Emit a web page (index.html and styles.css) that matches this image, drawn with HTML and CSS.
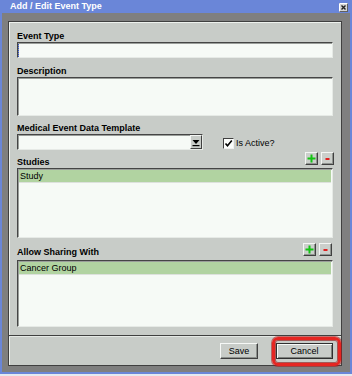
FILE: index.html
```html
<!DOCTYPE html>
<html>
<head>
<meta charset="utf-8">
<link rel="stylesheet" href="styles.css">
</head>
<body>
<div class="window">
  <div class="titlebar">
    <span class="title">Add / Edit Event Type</span>
    <span class="close">
      <svg width="9" height="9" viewBox="0 0 9 9"><rect x="0.5" y="0.5" width="8" height="8" fill="#d6d6d6" stroke="#606060"/><path d="M0.5 8.5V0.5H8.5" fill="none" stroke="#fff"/><path d="M2.5 2.5L6.5 6.5M6.5 2.5L2.5 6.5" stroke="#202020" stroke-width="1.4"/></svg>
    </span>
  </div>
  <div class="frame">
    <div class="panel">
      <div class="main">
        <div class="label">Event Type</div>
        <div class="input"><span class="caret"></span></div>

        <div class="label label-desc">Description</div>
        <div class="textarea"></div>

        <div class="label label-tpl">Medical Event Data Template</div>
        <div class="select-row">
          <div class="select">
            <div class="select-btn">
              <svg width="10" height="14" viewBox="0 0 10 14"><path d="M1.5 5H8.5L5 9Z" fill="#000"/><rect x="1.5" y="10" width="7" height="1.2" fill="#000"/></svg>
            </div>
          </div>
          <div class="check">
            <span class="box"><svg width="9" height="9" viewBox="0 0 9 9"><path d="M1.5 4.5L3.5 6.8L7.8 1.6" fill="none" stroke="#000" stroke-width="1.6"/></svg></span>
            <span class="check-text">Is Active?</span>
          </div>
        </div>

        <div class="list-head head-studies">
          <span class="label">Studies</span>
          <div class="tools">
            <button class="tool plus" type="button"><svg width="9" height="9" viewBox="0 0 9 9"><path d="M3.5 0.5H5.5V3.5H8.5V5.5H5.5V8.5H3.5V5.5H0.5V3.5H3.5Z" fill="#12c412"/></svg></button>
            <button class="tool minus" type="button"><svg width="9" height="9" viewBox="0 0 9 9"><rect x="2.5" y="4" width="4" height="2" fill="#e02020"/></svg></button>
          </div>
        </div>
        <div class="list list-studies">
          <div class="item">Study</div>
        </div>

        <div class="list-head head-sharing">
          <span class="label">Allow Sharing With</span>
          <div class="tools tools-shift">
            <button class="tool plus" type="button"><svg width="9" height="9" viewBox="0 0 9 9"><path d="M3.5 0.5H5.5V3.5H8.5V5.5H5.5V8.5H3.5V5.5H0.5V3.5H3.5Z" fill="#12c412"/></svg></button>
            <button class="tool minus" type="button"><svg width="9" height="9" viewBox="0 0 9 9"><rect x="2.5" y="4" width="4" height="2" fill="#e02020"/></svg></button>
          </div>
        </div>
        <div class="list list-sharing">
          <div class="item">Cancer Group</div>
        </div>
      </div>
      <div class="footer">
        <button class="btn btn-save" type="button">Save</button>
        <button class="btn btn-cancel" type="button">Cancel</button>
      </div>
    </div>
  </div>
  <div class="highlight"></div>
</div>
</body>
</html>
```
FILE: styles.css
```css
html, body {
  margin: 0;
  padding: 0;
}
body {
  background: #e6eaf0;
  font-family: "Liberation Sans", Arial, sans-serif;
  color: #000;
}
.window {
  position: relative;
  width: 352px;
  height: 374px;
  box-sizing: border-box;
  border: 2px solid #6a86d8;
  border-top: 0;
  background: #7f7f7f;
  display: flex;
  flex-direction: column;
}
.titlebar {
  height: 13px;
  margin: 0 -2px;
  background: #6a86d8;
  display: flex;
  align-items: center;
  justify-content: space-between;
  padding: 0 4px 0 10px;
}
.title {
  color: #fff;
  font: bold 9px/13px "Liberation Sans", Arial, sans-serif;
}
.close {
  display: flex;
  width: 9px;
  height: 9px;
  margin-top: 2px;
}
.frame {
  flex: 1;
  padding: 8px 8px 6px 6px;
  display: flex;
}
.panel {
  flex: 1;
  border: 1px solid #404040;
  background: #c8ccc8;
  display: flex;
  flex-direction: column;
  box-shadow: inset 1px 1px 0 #eef2ee;
}
.main {
  flex: 1;
  padding: 9px 8px 0 8px;
}
.label {
  display: block;
  font: bold 9px/10px "Liberation Sans", Arial, sans-serif;
  height: 10px;
  margin-bottom: 1px;
  white-space: nowrap;
}
.label-desc { margin-top: 8px; }
.label-tpl { margin-top: 7px; }

.input, .textarea, .select, .list {
  box-sizing: border-box;
  background: #f6faf6;
  border: 1px solid;
  border-color: #454545 #e6eae6 #e6eae6 #454545;
  box-shadow: inset 1px 1px 0 #9a9e9a;
}
.input {
  height: 16px;
  display: flex;
  align-items: center;
}
.caret {
  display: block;
  width: 0;
  height: 13px;
  margin-left: 0;
  border-left: 1px dotted #3050d0;
}
.textarea {
  height: 39px;
}
.select-row {
  display: flex;
  align-items: center;
  height: 16px;
}
.select {
  width: 186px;
  height: 16px;
  display: flex;
  justify-content: flex-end;
}
.select-btn {
  width: 12px;
  height: 14px;
  box-sizing: border-box;
  background: #c8ccc8;
  border: 1px solid;
  border-color: #f4f6f4 #404040 #404040 #f4f6f4;
  display: flex;
  align-items: center;
  justify-content: center;
}
.check {
  display: flex;
  align-items: center;
  margin-left: 20px;
  margin-top: 2px;
}
.box {
  width: 11px;
  height: 11px;
  box-sizing: border-box;
  border: 1px solid;
  border-color: #404040 #f0f0f0 #f0f0f0 #404040;
  background: #fbfdfb;
  display: flex;
  align-items: center;
  justify-content: center;
}
.check-text {
  font: 9px/10px "Liberation Sans", Arial, sans-serif;
  margin-left: 2px;
}
.list-head {
  display: flex;
  justify-content: space-between;
  align-items: flex-end;
}
.list-head .label {
  margin-bottom: 0;
}
.head-studies { margin-top: 2px; }
.head-sharing { margin-top: 5px; }
.tools {
  display: flex;
  gap: 3px;
  margin-bottom: 2px;
  margin-right: -1px;
}
.tools-shift {
  margin-bottom: 1px;
  margin-right: 1px;
}
.tool {
  width: 13px;
  height: 13px;
  padding: 0;
  margin: 0;
  box-sizing: border-box;
  background: #cbcfcb;
  border: 1px solid;
  border-color: #f4f6f4 #404040 #404040 #f4f6f4;
  box-shadow: inset -1px -1px 0 #909490;
  display: flex;
  align-items: center;
  justify-content: center;
}
.list {
  padding: 1px 1px 0 1px;
}
.list-studies {
  margin-top: 1px;
  height: 70px;
}
.list-sharing {
  margin-top: 3px;
  height: 67px;
}
.item {
  height: 12px;
  background: #b1d3a1;
  font: 9px/12px "Liberation Sans", Arial, sans-serif;
  padding-left: 1px;
  box-shadow: 0 1px 0 #dde1dd;
  white-space: nowrap;
}
.footer {
  height: 30px;
  box-sizing: border-box;
  border-top: 1px solid #404040;
  box-shadow: inset 0 1px 0 #e4e8e4;
  display: flex;
  justify-content: flex-end;
  align-items: flex-start;
  gap: 18px;
  padding: 7px 8px 0 8px;
}
.btn {
  height: 16px;
  padding: 0;
  margin: 0;
  box-sizing: border-box;
  background: #c8ccc8;
  font: 9px/14px "Liberation Sans", Arial, sans-serif;
  color: #000;
  text-align: center;
  border: 1px solid;
  border-color: #f6f8f6 #404040 #404040 #f6f8f6;
  box-shadow: inset -1px -1px 0 #8c908c;
}
.btn-save { width: 38px; }
.btn-cancel {
  width: 57px;
  border-color: #303030;
  box-shadow: inset 1px 1px 0 #f6f8f6, inset -1px -1px 0 #7c807c;
}
.highlight {
  position: absolute;
  left: 270px;
  top: 337px;
  width: 69px;
  height: 29px;
  box-sizing: border-box;
  border: 3px solid #e52622;
  border-radius: 6px;
  box-shadow: 0 0 0 1px rgba(170, 20, 20, 0.55), inset 0 0 0 1px rgba(140, 10, 10, 0.6);
}
```
